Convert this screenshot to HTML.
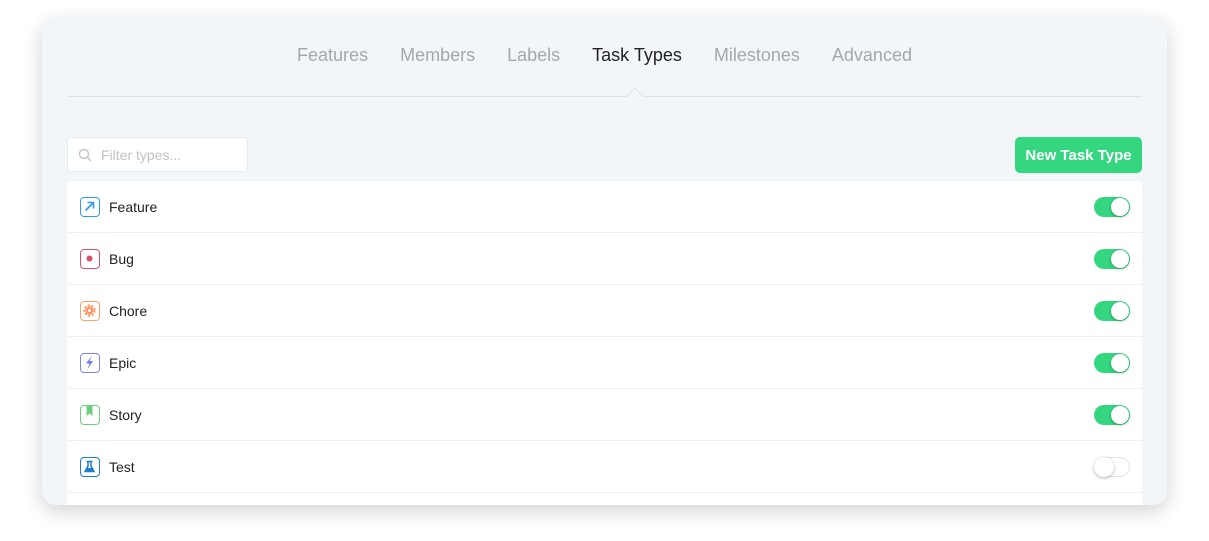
<!DOCTYPE html>
<html><head><style>
*{box-sizing:border-box;margin:0;padding:0}
body{width:1209px;height:541px;background:#fff;font-family:"Liberation Sans",Arial,sans-serif;position:relative;overflow:hidden}
.card{position:absolute;left:42px;top:18px;width:1125px;height:487px;background:#f3f6f9;border-radius:14px;box-shadow:0 6px 20px rgba(0,0,0,.18);overflow:hidden}
.tabs{position:absolute;top:27px;left:0;width:100%;text-align:center;font-size:18px;color:#a3a8ad;white-space:nowrap}
.tabs span{display:inline-block;margin:0 16px}
.tabs .act{color:#222}
.line{position:absolute;left:25px;top:78px;width:1075px;height:1px;background:#dfe3e7}
.notch{position:absolute;left:587px;top:72px;width:12px;height:12px;background:#f3f6f9;border-left:1px solid #dfe3e7;border-top:1px solid #dfe3e7;transform:rotate(45deg)}
.filter{position:absolute;left:25px;top:119px;width:181px;height:35px;background:#fff;border:1px solid #e8ebee;border-radius:4px;font-size:14px;color:#bfc3c7;padding:9px 0 0 33px}
.filter svg{position:absolute;left:10px;top:10px}
.btn{position:absolute;left:973px;top:119px;width:127px;height:36px;background:#35d680;border-radius:5px;color:#fff;font-weight:bold;font-size:15px;text-align:center;line-height:37px}
.list{position:absolute;left:25px;top:163px;width:1075px;height:340px;background:#fff;border-radius:4px}
.row{height:52px;border-bottom:1px solid #eef0f2;position:relative;font-size:14px;color:#222;line-height:52px;padding-left:42px}
.ic{position:absolute;left:13px;top:16px;width:20px;height:20px;border:1.5px solid;border-radius:4px}
.ic svg{position:absolute;left:0;top:0}
.tg{position:absolute;left:1027px;top:16px;width:36px;height:20px;border-radius:10px;background:#35d680}
.tg::after{content:"";position:absolute;right:1px;top:1px;width:18px;height:18px;border-radius:50%;background:#fff;box-shadow:0 1px 3px rgba(0,0,0,.3)}
.tg.off{background:#fff;border:1px solid #e0e3e6}
.tg.off::after{left:-1px;top:-1px;right:auto;width:20px;height:20px}
</style></head><body>
<div class="card">
<div class="tabs"><span>Features</span><span>Members</span><span>Labels</span><span class="act">Task Types</span><span>Milestones</span><span>Advanced</span></div>
<div class="line"></div><div class="notch"></div>
<div class="filter"><svg width="14" height="14" viewBox="0 0 14 14"><circle cx="6" cy="6" r="4.5" fill="none" stroke="#c3c7cb" stroke-width="1.5"/><path d="M9.5 9.5L13 13" stroke="#c3c7cb" stroke-width="1.5"/></svg>Filter types...</div>
<div class="btn">New Task Type</div>
<div class="list">
<div class="row"><span class="ic" style="border-color:#2d9cf0"><svg width="17" height="17" viewBox="0 0 17 17"><path d="M4.5 12.5L12 5M6.5 4.5h6v6" stroke="#2d9cf0" stroke-width="1.6" fill="none"/></svg></span>Feature<span class="tg"></span></div>
<div class="row"><span class="ic" style="border-color:#d9506a"><svg width="17" height="17" viewBox="0 0 17 17"><circle cx="8.5" cy="8.5" r="3" fill="#d9506a"/></svg></span>Bug<span class="tg"></span></div>
<div class="row"><span class="ic" style="border-color:#ffa070"><svg width="17" height="17" viewBox="0 0 17 17"><circle cx="8.5" cy="8.5" r="5" fill="none" stroke="#ff9a66" stroke-width="2.4" stroke-dasharray="2 1.6"/><circle cx="8.5" cy="8.5" r="4" fill="#ff9a66"/><circle cx="8.5" cy="8.5" r="1.5" fill="#fff"/></svg></span>Chore<span class="tg"></span></div>
<div class="row"><span class="ic" style="border-color:#7b86ee"><svg width="17" height="17" viewBox="0 0 17 17"><path d="M11 1.5L5 9.5H8.5L6.5 15.5L12 7H8.5Z" fill="#6f7cf0"/></svg></span>Epic<span class="tg"></span></div>
<div class="row"><span class="ic" style="border-color:#6fcf7f"><svg width="17" height="17" viewBox="0 0 17 17"><path d="M5.5 0V10L8.5 7.5L11.5 10V0Z" fill="#6fcf7f"/></svg></span>Story<span class="tg"></span></div>
<div class="row"><span class="ic" style="border-color:#1c7fd0"><svg width="17" height="17" viewBox="0 0 17 17"><path d="M5.5 3.5h6M7 3.5V8L4 13.5h9L10 8V3.5" stroke="#1c7fd0" stroke-width="1.5" fill="none"/><path d="M5.5 10h6L13 13.5h-9Z" fill="#1c7fd0"/></svg></span>Test<span class="tg off"></span></div>
</div>
</div>
</body></html>
